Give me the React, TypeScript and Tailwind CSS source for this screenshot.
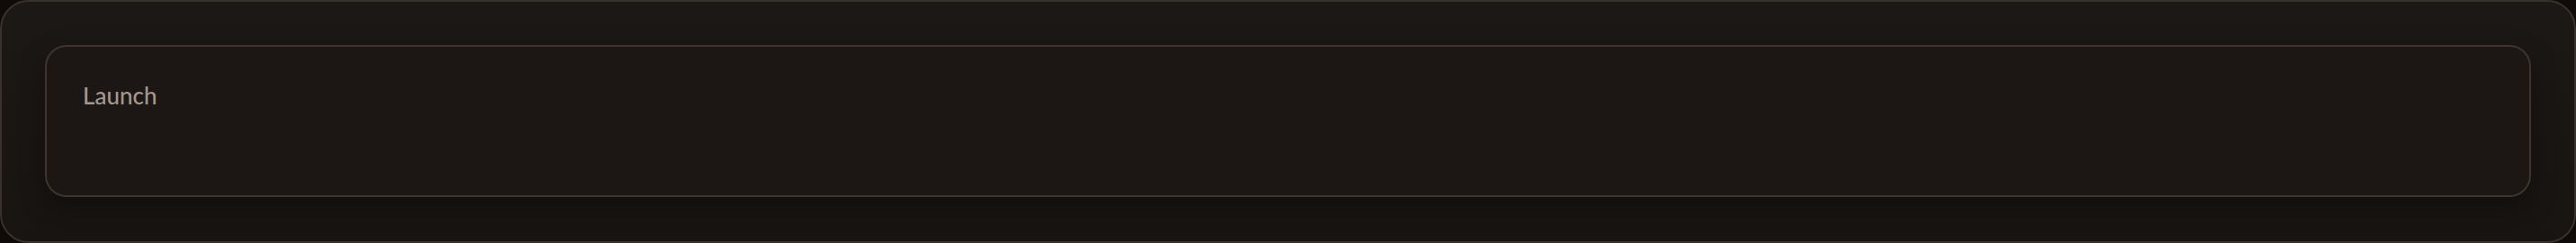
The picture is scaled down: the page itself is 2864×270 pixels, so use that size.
export default function App() {
  return (
    <div className="w-[2864px] h-[270px] bg-[#0e0b09]">
      {/* outer panel */}
      <div className="h-[270px] rounded-[32px] border-2 border-[#3a302c] bg-gradient-to-b from-[#1c1815] to-[#181411] p-[48px]">
        {/* launch card */}
        <div className="h-[169px] rounded-[24px] border-2 border-[#3e3430] bg-[#1c1714] px-[40px] pt-[39px] shadow-[0_10px_28px_rgba(0,0,0,0.35)]">
          <p className="font-['Lato','Liberation_Sans',sans-serif] text-[26px] font-medium leading-[30px] text-[#a4978f]">
            Launch
          </p>
        </div>
      </div>
    </div>
  );
}
